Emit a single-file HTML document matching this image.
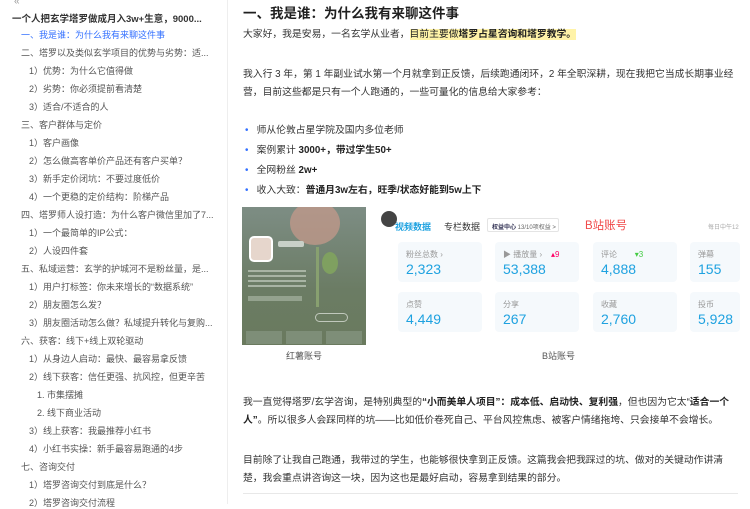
<!DOCTYPE html>
<html><head><meta charset="utf-8"><style>
*{margin:0;padding:0;box-sizing:border-box}
body{width:750px;height:504px;overflow:hidden;background:#fff;font-family:"Liberation Sans","Noto Sans CJK SC",sans-serif;color:#333;position:relative}
.sb{position:absolute;left:0;top:0;width:228px;height:504px;border-right:1px solid #eee;font-size:9px;color:#555}
.sb div{position:absolute;white-space:nowrap}
.a{position:absolute;white-space:nowrap}
.p{font-size:9.8px;color:#333}
b{font-weight:bold;color:#222}
.card{position:absolute;background:#f5f9fc;border-radius:4px;width:84px;height:40px}
.card .l{position:absolute;left:8px;top:7px;font-size:8px;color:#999}
.card .v{position:absolute;left:8px;top:19px;font-size:14px;color:#1fa2e0}
</style></head><body>
<div class="sb">
<div style="left:14px;top:-4px;font-size:10px;color:#999">«</div>
<div style="left:12px;top:11px;font-size:9.5px;font-weight:bold;color:#333">一个人把玄学塔罗做成月入3w+生意，9000...</div>
<div style="left:21px;top:28px;color:#3370ff">一、我是谁：为什么我有来聊这件事</div>
<div style="left:21px;top:46px">二、塔罗以及类似玄学项目的优势与劣势：适...</div>
<div style="left:29px;top:64px">1）优势：为什么它值得做</div>
<div style="left:29px;top:82px">2）劣势：你必须提前看清楚</div>
<div style="left:29px;top:100px">3）适合/不适合的人</div>
<div style="left:21px;top:118px">三、客户群体与定价</div>
<div style="left:29px;top:136px">1）客户画像</div>
<div style="left:29px;top:154px">2）怎么做高客单价产品还有客户买单？</div>
<div style="left:29px;top:172px">3）新手定价闭坑：不要过度低价</div>
<div style="left:29px;top:190px">4）一个更稳的定价结构：阶梯产品</div>
<div style="left:21px;top:208px">四、塔罗师人设打造：为什么客户微信里加了7...</div>
<div style="left:29px;top:226px">1）一个最简单的IP公式：</div>
<div style="left:29px;top:244px">2）人设四件套</div>
<div style="left:21px;top:262px">五、私域运营：玄学的护城河不是粉丝量，是...</div>
<div style="left:29px;top:280px">1）用户打标签：你未来增长的“数据系统”</div>
<div style="left:29px;top:298px">2）朋友圈怎么发？</div>
<div style="left:29px;top:316px">3）朋友圈活动怎么做？私域提升转化与复购...</div>
<div style="left:21px;top:334px">六、获客：线下+线上双轮驱动</div>
<div style="left:29px;top:352px">1）从身边人启动：最快、最容易拿反馈</div>
<div style="left:29px;top:370px">2）线下获客：信任更强、抗风控，但更辛苦</div>
<div style="left:37px;top:388px">1. 市集摆摊</div>
<div style="left:37px;top:406px">2. 线下商业活动</div>
<div style="left:29px;top:424px">3）线上获客：我最推荐小红书</div>
<div style="left:29px;top:442px">4）小红书实操：新手最容易跑通的4步</div>
<div style="left:21px;top:460px">七、咨询交付</div>
<div style="left:29px;top:478px">1）塔罗咨询交付到底是什么？</div>
<div style="left:29px;top:496px">2）塔罗咨询交付流程</div>
</div>

<div class="a" style="left:243px;top:2px;font-size:13.5px;font-weight:bold;color:#1f1f1f">一、我是谁：为什么我有来聊这件事</div>
<div class="a p" style="left:243px;top:26px">大家好，我是安易，一名玄学从业者，<span style="background:#fff3a8;color:#222">目前主要做<b>塔罗占星咨询和塔罗教学。</b></span></div>
<div class="a p" style="left:243px;top:66px">我入行 3 年，第 1 年副业试水第一个月就拿到正反馈，后续跑通闭环，2 年全职深耕，现在我把它当成长期事业经</div>
<div class="a p" style="left:243px;top:84px">营，目前这些都是只有一个人跑通的，一些可量化的信息给大家参考：</div>
<div class="a p" style="left:245px;top:122px"><span style="color:#3370ff">•</span>&nbsp;&nbsp; 师从伦敦占星学院及国内多位老师</div>
<div class="a p" style="left:245px;top:142px"><span style="color:#3370ff">•</span>&nbsp;&nbsp; 案例累计 <b>3000+，带过学生50+</b></div>
<div class="a p" style="left:245px;top:162px"><span style="color:#3370ff">•</span>&nbsp;&nbsp; 全网粉丝 <b>2w+</b></div>
<div class="a p" style="left:245px;top:182px"><span style="color:#3370ff">•</span>&nbsp;&nbsp; 收入大致：<b>普通月3w左右，旺季/状态好能到5w上下</b></div>

<div class="a" style="left:242px;top:207px;width:124px;height:138px;background:linear-gradient(180deg,#7d8d84,#6b7c64 60%,#6a7a5e);overflow:hidden">
 <div style="position:absolute;left:48px;top:-6px;width:50px;height:44px;border-radius:50%;background:#c99a8c;opacity:.7"></div>
 <div style="position:absolute;left:74px;top:40px;width:3px;height:60px;background:#88a070"></div>
 <div style="position:absolute;left:80px;top:45px;width:16px;height:22px;border-radius:50%;background:#7fa060"></div>
 <div style="position:absolute;left:7px;top:29px;width:24px;height:26px;border-radius:5px;background:#e6d6cc;border:2px solid #fff"></div>
 <div style="position:absolute;left:36px;top:34px;width:26px;height:6px;background:#c8d0c8;border-radius:2px"></div>
 <div style="position:absolute;left:6px;top:63px;width:58px;height:20px;background:repeating-linear-gradient(180deg,#a8b4a4 0 2px,transparent 2px 5px)"></div>
 <div style="position:absolute;left:6px;top:89px;width:54px;height:5px;background:#94a28e"></div>
 <div style="position:absolute;left:73px;top:106px;width:33px;height:9px;border:1px solid #c0c8bc;border-radius:5px"></div>
 <div style="position:absolute;left:4px;top:124px;width:36px;height:13px;background:#7e8e78"></div>
 <div style="position:absolute;left:44px;top:124px;width:36px;height:13px;background:#7e8e78"></div>
 <div style="position:absolute;left:84px;top:124px;width:36px;height:13px;background:#7e8e78"></div>
</div>
<div class="a" style="left:286px;top:349px;font-size:9px;color:#555">红薯账号</div>

<div class="a" style="left:384px;top:205px;width:358px;height:140px;background:#fff">
 <div style="position:absolute;left:-3px;top:6px;width:16px;height:16px;border-radius:50%;background:#444"></div>
 <div style="position:absolute;left:11px;top:15px;font-size:9px;color:#1fa2e0;font-weight:bold">视频数据</div>
 <div style="position:absolute;left:60px;top:15px;font-size:9px;color:#333">专栏数据</div>
 <div style="position:absolute;left:103px;top:13px;width:72px;height:14px;border:1px solid #e4e4e4;border-radius:2px;font-size:6px;color:#666;padding:3px 4px"><b style="color:#335">权益中心</b> 13/10项权益 &gt;</div>
 <div style="position:absolute;left:201px;top:12px;font-size:11.5px;color:#f04a4a">B站账号</div>
 <div style="position:absolute;left:324px;top:17px;font-size:6px;color:#aaa">每日中午12</div>
</div>
<div class="card" style="left:398px;top:242px"><div class="l">粉丝总数 ›</div><div class="v">2,323</div></div>
<div class="card" style="left:495px;top:242px"><div class="l">▶ 播放量 › <span style="color:#f06">&nbsp;&nbsp;&nbsp;▴9</span></div><div class="v">53,388</div></div>
<div class="card" style="left:593px;top:242px"><div class="l">评论 <span style="color:#4c4">&nbsp;&nbsp;&nbsp;&nbsp;&nbsp;&nbsp;&nbsp;▾3</span></div><div class="v">4,888</div></div>
<div class="card" style="left:690px;top:242px;width:50px"><div class="l">弹幕</div><div class="v">155</div></div>
<div class="card" style="left:398px;top:292px"><div class="l">点赞</div><div class="v">4,449</div></div>
<div class="card" style="left:495px;top:292px"><div class="l">分享</div><div class="v">267</div></div>
<div class="card" style="left:593px;top:292px"><div class="l">收藏</div><div class="v">2,760</div></div>
<div class="card" style="left:690px;top:292px;width:50px"><div class="l">投币</div><div class="v">5,928</div></div>
<div class="a" style="left:542px;top:349px;font-size:9px;color:#555">B站账号</div>

<div class="a p" style="left:243px;top:394px">我一直觉得塔罗/玄学咨询，是特别典型的<b>“小而美单人项目”：成本低、启动快、复利强</b>，但也因为它太“<b>适合一个</b></div>
<div class="a p" style="left:243px;top:412px"><b>人”</b>。所以很多人会踩同样的坑——比如低价卷死自己、平台风控焦虑、被客户情绪拖垮、只会接单不会增长。</div>
<div class="a p" style="left:243px;top:452px">目前除了让我自己跑通，我带过的学生，也能够很快拿到正反馈。这篇我会把我踩过的坑、做对的关键动作讲清</div>
<div class="a p" style="left:243px;top:470px">楚，我会重点讲咨询这一块，因为这也是最好启动，容易拿到结果的部分。</div>
<div class="a" style="left:243px;top:493px;width:495px;height:1px;background:#e8e8e8"></div>
</body></html>
